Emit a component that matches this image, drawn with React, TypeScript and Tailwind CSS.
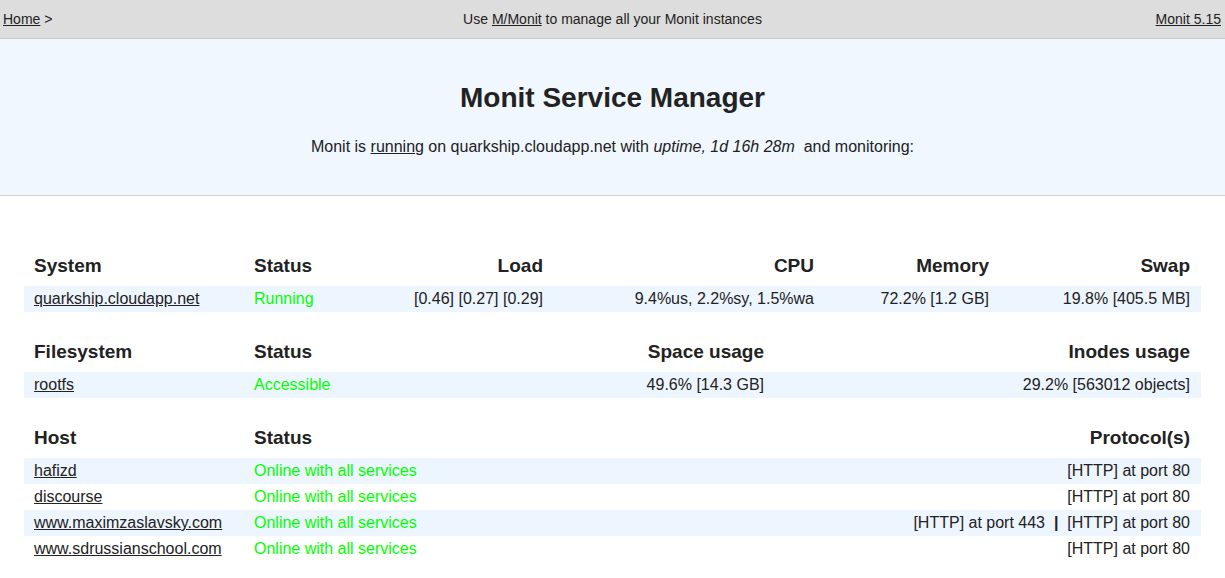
import React from "react";

const font = { fontFamily: '"Liberation Sans", Arial, sans-serif' };

type Cell = { text: React.ReactNode; align?: "left" | "right"; width?: string };

function Section({
  head,
  rows,
}: {
  head: Cell[];
  rows: React.ReactNode[][];
}) {
  return (
    <table className="w-full table-fixed border-collapse mb-[18px]">
      <thead>
        <tr className="h-[42px]">
          {head.map((h, i) => (
            <th
              key={i}
              className={`${h.width ?? ""} ${
                h.align === "right" ? "text-right pr-[11px]" : "text-left pl-[10px]"
              } align-bottom pb-[9px] text-[19px] leading-[22px] font-bold text-[#222]`}
            >
              {h.text}
            </th>
          ))}
        </tr>
      </thead>
      <tbody>
        {rows.map((r, ri) => (
          <tr key={ri} className={`h-[26px] ${ri % 2 === 0 ? "bg-[#edf5fe]" : "bg-white"}`}>
            {r.map((c, ci) => (
              <td
                key={ci}
                className={`${
                  head[ci].align === "right" ? "text-right pr-[11px]" : "text-left pl-[10px]"
                } text-[16px] leading-[18px] py-[4px] text-[#222] whitespace-nowrap`}
              >
                {c}
              </td>
            ))}
          </tr>
        ))}
      </tbody>
    </table>
  );
}

const Ok = ({ children }: { children: React.ReactNode }) => (
  <span className="text-[#00ff00]">{children}</span>
);

const L = ({ children }: { children: React.ReactNode }) => (
  <a href="#" className="underline text-[#222]">
    {children}
  </a>
);

export default function App() {
  return (
    <div style={font} className="min-h-screen bg-white text-[#222]">
      {/* top bar */}
      <div className="h-[39px] bg-[#dddddd] border-b border-[#c9c9c9] flex items-center justify-between px-[3px] text-[14px]">
        <div className="w-[200px]">
          <L>Home</L> &gt;
        </div>
        <div>
          Use <L>M/Monit</L> to manage all your Monit instances
        </div>
        <div className="w-[200px] text-right pr-[1px]">
          <L>Monit 5.15</L>
        </div>
      </div>

      {/* header */}
      <div className="h-[157px] bg-[#f0f7ff] border-b border-[#cfcfcf] flex flex-col items-center">
        <h1 className="mt-[43px] text-[28px] leading-[32px] font-bold">Monit Service Manager</h1>
        <p className="mt-[24px] text-[16px] leading-[18px]">
          Monit is <L>running</L> on quarkship.cloudapp.net with <i>uptime, 1d 16h 28m</i>
          {"\u00a0 "}and monitoring:
        </p>
      </div>

      <div className="mx-[24px] mt-[48px]">
        <Section
          head={[
            { text: "System", width: "w-[220px]" },
            { text: "Status", width: "w-[157px]" },
            { text: "Load", align: "right", width: "w-[153px]" },
            { text: "CPU", align: "right", width: "w-[271px]" },
            { text: "Memory", align: "right", width: "w-[175px]" },
            { text: "Swap", align: "right" },
          ]}
          rows={[
            [
              <L>quarkship.cloudapp.net</L>,
              <Ok>Running</Ok>,
              "[0.46] [0.27] [0.29]",
              "9.4%us, 2.2%sy, 1.5%wa",
              "72.2% [1.2 GB]",
              "19.8% [405.5 MB]",
            ],
          ]}
        />
        <Section
          head={[
            { text: "Filesystem", width: "w-[220px]" },
            { text: "Status", width: "w-[257px]" },
            { text: "Space usage", align: "right", width: "w-[274px]" },
            { text: "Inodes usage", align: "right" },
          ]}
          rows={[
            [<L>rootfs</L>, <Ok>Accessible</Ok>, "49.6% [14.3 GB]", "29.2% [563012 objects]"],
          ]}
        />
        <Section
          head={[
            { text: "Host", width: "w-[220px]" },
            { text: "Status", width: "w-[356px]" },
            { text: "Protocol(s)", align: "right" },
          ]}
          rows={[
            [<L>hafizd</L>, <Ok>Online with all services</Ok>, "[HTTP] at port 80"],
            [<L>discourse</L>, <Ok>Online with all services</Ok>, "[HTTP] at port 80"],
            [
              <L>www.maximzaslavsky.com</L>,
              <Ok>Online with all services</Ok>,
              <>
                [HTTP] at port 443{"\u00a0 "}
                <b>|</b>
                {"\u00a0 "}[HTTP] at port 80
              </>,
            ],
            [<L>www.sdrussianschool.com</L>, <Ok>Online with all services</Ok>, "[HTTP] at port 80"],
          ]}
        />
      </div>
    </div>
  );
}
